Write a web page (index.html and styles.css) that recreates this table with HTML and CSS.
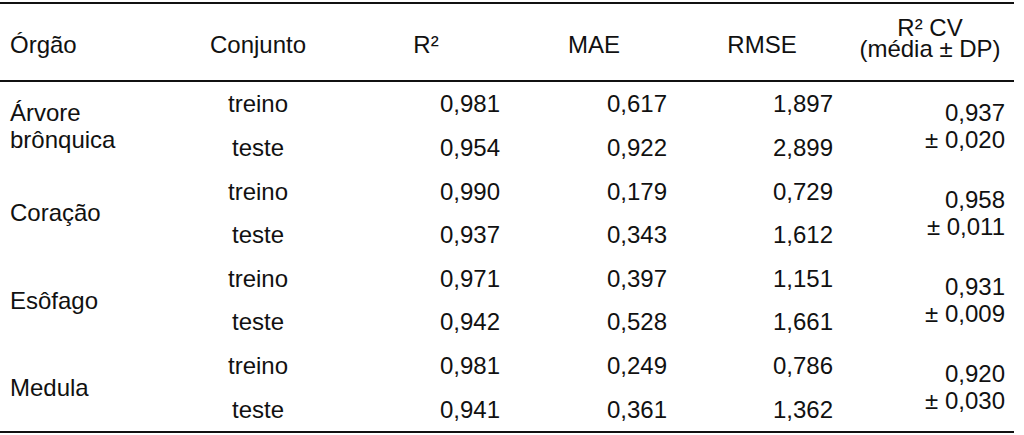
FILE: index.html
```html
<!DOCTYPE html>
<html lang="pt">
<head>
<meta charset="utf-8">
<title>Tabela</title>
<link rel="stylesheet" href="styles.css">
</head>
<body>
<div class="table">
  <div class="head">
    <div class="cell left">Órgão</div>
    <div class="cell center">Conjunto</div>
    <div class="cell center">R²</div>
    <div class="cell center">MAE</div>
    <div class="cell center">RMSE</div>
    <div class="cell center two">R² CV<br>(média ± DP)</div>
  </div>
  <div class="body">
    <div class="cell left span2">Árvore<br>brônquica</div>
    <div class="cell center">treino</div>
    <div class="cell num c3">0,981</div>
    <div class="cell num c4">0,617</div>
    <div class="cell num c5">1,897</div>
    <div class="cell num c6 span2">0,937<br>± 0,020</div>
    <div class="cell center">teste</div>
    <div class="cell num c3">0,954</div>
    <div class="cell num c4">0,922</div>
    <div class="cell num c5">2,899</div>

    <div class="cell left span2">Coração</div>
    <div class="cell center">treino</div>
    <div class="cell num c3">0,990</div>
    <div class="cell num c4">0,179</div>
    <div class="cell num c5">0,729</div>
    <div class="cell num c6 span2">0,958<br>± 0,011</div>
    <div class="cell center">teste</div>
    <div class="cell num c3">0,937</div>
    <div class="cell num c4">0,343</div>
    <div class="cell num c5">1,612</div>

    <div class="cell left span2">Esôfago</div>
    <div class="cell center">treino</div>
    <div class="cell num c3">0,971</div>
    <div class="cell num c4">0,397</div>
    <div class="cell num c5">1,151</div>
    <div class="cell num c6 span2">0,931<br>± 0,009</div>
    <div class="cell center">teste</div>
    <div class="cell num c3">0,942</div>
    <div class="cell num c4">0,528</div>
    <div class="cell num c5">1,661</div>

    <div class="cell left span2">Medula</div>
    <div class="cell center">treino</div>
    <div class="cell num c3">0,981</div>
    <div class="cell num c4">0,249</div>
    <div class="cell num c5">0,786</div>
    <div class="cell num c6 span2">0,920<br>± 0,030</div>
    <div class="cell center">teste</div>
    <div class="cell num c3">0,941</div>
    <div class="cell num c4">0,361</div>
    <div class="cell num c5">1,362</div>
  </div>
</div>
</body>
</html>
```
FILE: styles.css
```css
html, body {
  margin: 0;
  padding: 0;
  background: #fff;
}
body {
  font-family: "Liberation Sans", Arial, sans-serif;
  font-size: 24px;
  color: #111;
}
.table {
  width: 1014px;
  margin-top: 2px;
  border-top: 2px solid #111;
  border-bottom: 2px solid #111;
}
.head, .body {
  display: grid;
  grid-template-columns: 174px 168px 168px 168px 168px 168px;
}
.head {
  height: 76px;
  border-bottom: 2px solid #111;
}
.head .cell {
  display: flex;
  flex-direction: column;
  justify-content: flex-end;
  padding-bottom: 24px;
  line-height: 22px;
}
.head .two {
  padding-bottom: 21px;
  line-height: 21px;
}
.body {
  grid-template-rows: repeat(8, 43.625px);
}
.body .cell {
  display: flex;
  flex-direction: column;
  justify-content: center;
  line-height: 27px;
}
.cell {
  white-space: nowrap;
}
.left {
  align-items: flex-start;
  text-align: left;
  padding-left: 10px;
}
.center {
  align-items: center;
  text-align: center;
}
.num {
  align-items: flex-end;
  text-align: right;
}
.span2 {
  grid-row: span 2;
}
.c3 { padding-right: 10px; }
.c4 { padding-right: 11px; }
.c5 { padding-right: 13px; }
.c6 { padding-right: 9px; }
```
